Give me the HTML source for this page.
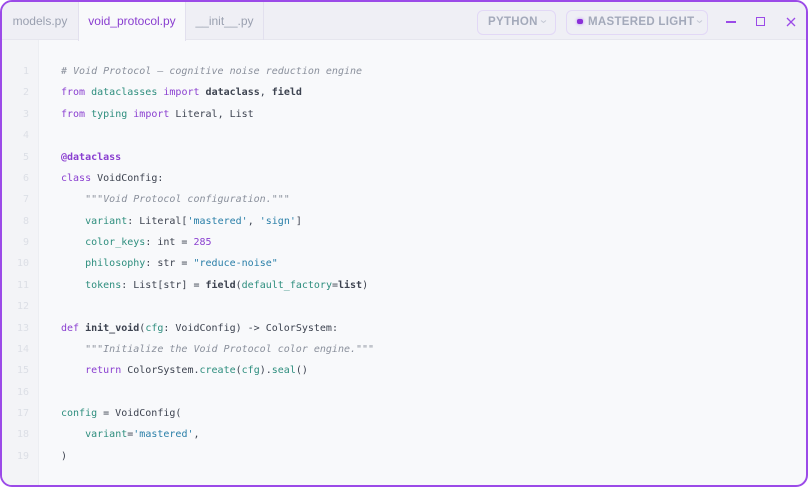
<!DOCTYPE html>
<html><head><meta charset="utf-8"><style>
*{box-sizing:border-box;margin:0;padding:0}
html,body{width:809px;height:488px;background:#fff;overflow:hidden}
.win{position:absolute;left:0;top:0;width:808px;height:487px;border:2px solid #9b4ae8;border-radius:12px;background:#f8f9fb;overflow:hidden}
.bar{position:absolute;left:0;top:0;right:0;height:38px;background:#efeff5;border-bottom:1px solid #e6e6ee;font-family:"Liberation Sans",sans-serif}
.tab{position:absolute;top:0;height:38px;line-height:38px;font-size:12px;color:#9aa0b0;text-align:center;border-right:1px solid #e2e0ee}
.tab.a{background:#f8f9fb;color:#8a3fd0;height:39px;border-left:1px solid #e2e0ee}
.pill{position:absolute;top:8px;height:25px;border:1px solid #e2d8f6;border-radius:6px;font-size:11.5px;font-weight:bold;color:#a3a9ba;line-height:23px;letter-spacing:.3px}
.chev{display:inline-block;vertical-align:1px;margin-left:2px}
.gut{position:absolute;left:0;top:38px;width:37px;bottom:0;background:#f3f4f7;border-right:1px solid #eceef2}
.code{position:absolute;left:0;top:61px;font-family:"DejaVu Sans Mono","Liberation Mono",monospace;font-size:10px;color:#3d4350}
.l{height:21.39px;line-height:21.39px;white-space:pre;position:relative}
.n{position:absolute;left:0;width:29px;text-align:right;color:#dcdfe6}
.t{position:absolute;left:61px}
.k{color:#8a3fd0}.m{color:#2e8e7e}.s{color:#2a7fa8}.c{color:#8a909c;font-style:italic}.b{font-weight:bold}.num{color:#8a3fd0}
</style></head><body>
<div class="win">
<div class="bar">
<div class="tab" style="left:0;width:77px">models.py</div>
<div class="tab a" style="left:76px;width:108px">void_protocol.py</div>
<div class="tab" style="left:184px;width:78px">__init__.py</div>
<div class="pill" style="left:475px;width:79px;padding-left:10px">PYTHON<svg class="chev" width="7" height="5" viewBox="0 0 7 5"><path d="M1 1.5L3.5 3.5L6 1.5" stroke="#c4c8d4" fill="none" stroke-width="1"/></svg></div>
<div class="pill" style="left:564px;width:142px;padding-left:10px"><span style="display:inline-block;width:6px;height:5px;background:#8a2fd8;border-radius:2px;margin-right:5px;vertical-align:1px;box-shadow:0 0 3px #b080f0"></span>MASTERED LIGHT<svg class="chev" width="7" height="5" viewBox="0 0 7 5"><path d="M1 1.5L3.5 3.5L6 1.5" stroke="#c4c8d4" fill="none" stroke-width="1"/></svg></div>
<div style="position:absolute;left:724px;top:19px;width:10px;height:1.5px;background:#9b4ae8"></div>
<div style="position:absolute;left:754px;top:15px;width:9px;height:9px;border:1.5px solid #9b4ae8"></div>
<svg style="position:absolute;left:784px;top:15px" width="10" height="10" viewBox="0 0 10 10"><path d="M1 1L9 9M9 1L1 9" stroke="#9b4ae8" stroke-width="1.3"/></svg>
</div>
<div class="gut"></div>
</div>
<div class="code">
<div class="l"><span class="n">1</span><span class="t c"># Void Protocol — cognitive noise reduction engine</span></div>
<div class="l"><span class="n">2</span><span class="t"><span class="k">from</span> <span class="m">dataclasses</span> <span class="k">import</span> <span class="b">dataclass</span>, <span class="b">field</span></span></div>
<div class="l"><span class="n">3</span><span class="t"><span class="k">from</span> <span class="m">typing</span> <span class="k">import</span> Literal, List</span></div>
<div class="l"><span class="n">4</span></div>
<div class="l"><span class="n">5</span><span class="t k b">@dataclass</span></div>
<div class="l"><span class="n">6</span><span class="t"><span class="k">class</span> VoidConfig:</span></div>
<div class="l"><span class="n">7</span><span class="t c">    """Void Protocol configuration."""</span></div>
<div class="l"><span class="n">8</span><span class="t">    <span class="m">variant</span>: Literal[<span class="s">'mastered'</span>, <span class="s">'sign'</span>]</span></div>
<div class="l"><span class="n">9</span><span class="t">    <span class="m">color_keys</span>: int = <span class="num">285</span></span></div>
<div class="l"><span class="n">10</span><span class="t">    <span class="m">philosophy</span>: str = <span class="s">"reduce-noise"</span></span></div>
<div class="l"><span class="n">11</span><span class="t">    <span class="m">tokens</span>: List[str] = <span class="b">field</span>(<span class="m">default_factory</span>=<span class="b">list</span>)</span></div>
<div class="l"><span class="n">12</span></div>
<div class="l"><span class="n">13</span><span class="t"><span class="k">def</span> <span class="b">init_void</span>(<span class="m">cfg</span>: VoidConfig) -> ColorSystem:</span></div>
<div class="l"><span class="n">14</span><span class="t c">    """Initialize the Void Protocol color engine."""</span></div>
<div class="l"><span class="n">15</span><span class="t">    <span class="k">return</span> ColorSystem.<span class="m">create</span>(<span class="m">cfg</span>).<span class="m">seal</span>()</span></div>
<div class="l"><span class="n">16</span></div>
<div class="l"><span class="n">17</span><span class="t"><span class="m">config</span> = VoidConfig(</span></div>
<div class="l"><span class="n">18</span><span class="t">    <span class="m">variant</span>=<span class="s">'mastered'</span>,</span></div>
<div class="l"><span class="n">19</span><span class="t">)</span></div>
</div>
</body></html>
